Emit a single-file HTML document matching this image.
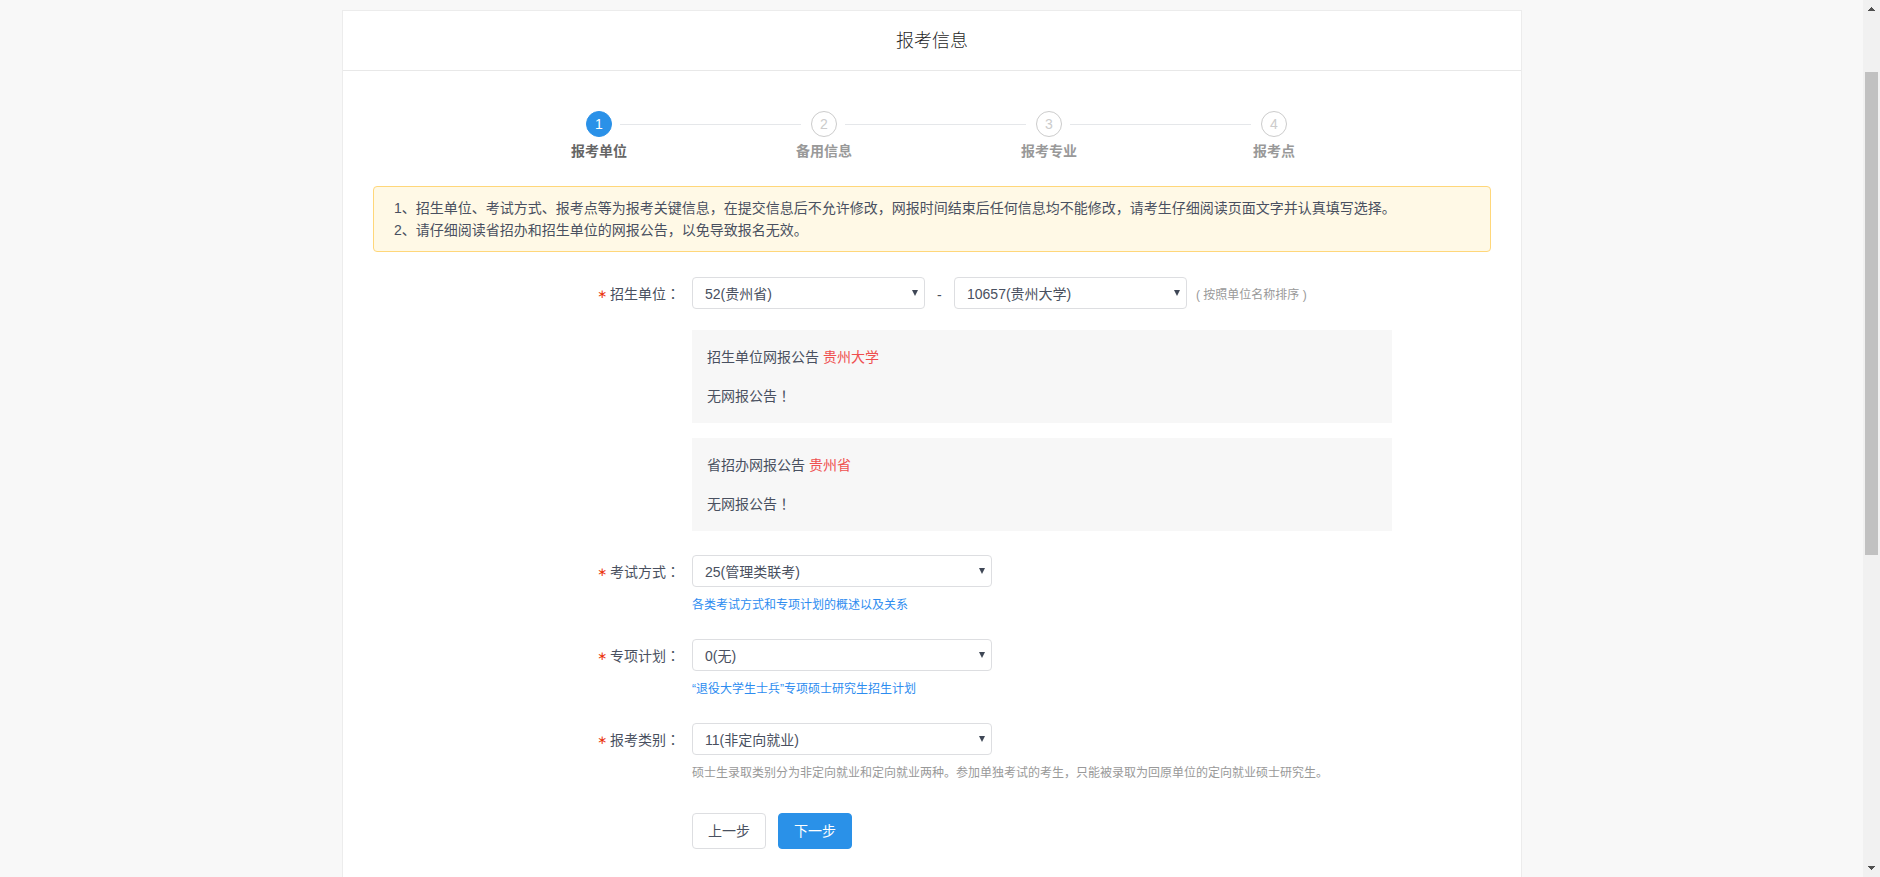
<!DOCTYPE html>
<html lang="zh-CN">
<head>
<meta charset="utf-8">
<title>报考信息</title>
<style>
*{box-sizing:border-box;margin:0;padding:0}
html,body{width:1880px;height:877px;overflow:hidden}
body{position:relative;background:#f8f8f8;color:#495060;font-family:"Liberation Sans","Noto Sans CJK SC",sans-serif;font-size:14px;line-height:1.5}
.abs{position:absolute;white-space:nowrap}
/* card */
#card{position:absolute;left:342px;top:10px;width:1180px;height:900px;background:#fff;border:1px solid #ececec}
#hd{position:absolute;left:0;top:0;width:1178px;height:60px;border-bottom:1px solid #e8e8e8;text-align:center;font-size:18px;font-weight:300;line-height:60px;color:#1f1f1f}
/* steps */
.dot{position:absolute;top:111px;width:26px;height:26px;border-radius:50%;border:1px solid #ccc;background:#fff;color:#ccc;text-align:center;font-size:14px;line-height:24px}
.dot.on{background:#2a91e8;border-color:#2a91e8;color:#fff}
.ln{position:absolute;top:124px;height:1px;width:181px;background:#e5e7ea}
.st{position:absolute;top:140px;width:120px;text-align:center;font-weight:bold;font-size:14px;line-height:22px;color:#999}
.st.on{color:#666}
/* alert */
#alert{position:absolute;left:373px;top:186px;width:1118px;height:66px;background:#fff9e6;border:1px solid #ffd77a;border-radius:4px;padding:10px 20px;font-size:14px;line-height:22px;color:#495060}
/* form */
.lab{position:absolute;width:86px;text-align:right;font-size:14px;line-height:32px;color:#495060;white-space:nowrap}
.lab i{position:absolute;left:3px;top:0;font-style:normal;color:#ea3208;font-family:"DejaVu Sans",sans-serif;font-size:12px;line-height:32px}
.jp{font-family:"Liberation Sans","Noto Sans CJK JP",sans-serif}
.sel{position:absolute;height:32px;border:1px solid #dddee1;border-radius:4px;background:#fff;font-size:14px;line-height:30px;padding:1px 0 0 12px;color:#495060;white-space:nowrap}
.sel:after{content:"";position:absolute;right:6px;top:12px;border:3.5px solid transparent;border-top:6px solid #3f4756;border-bottom:0}
.box{position:absolute;left:692px;width:700px;height:93px;background:#f7f7f7}
.box p{position:absolute;left:15px;font-size:14px;line-height:22px;color:#495060;white-space:nowrap}
.box p .r{color:#ef5050}
.tip{position:absolute;left:692px;font-size:12px;line-height:18px;white-space:nowrap}
.btn{position:absolute;top:813px;width:74px;height:36px;border-radius:4px;font-size:14px;line-height:34px;text-align:center}
/* scrollbar */
#sb{position:absolute;left:1863px;top:0;width:17px;height:877px;background:#f1f1f1}
#th{position:absolute;left:2px;top:72px;width:13px;height:483px;background:#c1c1c1}
</style>
</head>
<body>
<div id="card"><div id="hd">报考信息</div></div>

<div class="dot on" style="left:586px">1</div>
<div class="ln" style="left:620px"></div>
<div class="dot" style="left:811px">2</div>
<div class="ln" style="left:845px"></div>
<div class="dot" style="left:1036px">3</div>
<div class="ln" style="left:1070px"></div>
<div class="dot" style="left:1261px">4</div>
<div class="st on" style="left:539px">报考单位</div>
<div class="st" style="left:764px">备用信息</div>
<div class="st" style="left:989px">报考专业</div>
<div class="st" style="left:1214px">报考点</div>

<div id="alert">1、招生单位、考试方式、报考点等为报考关键信息，在提交信息后不允许修改，网报时间结束后任何信息均不能修改，请考生仔细阅读页面文字并认真填写选择。<br>2、请仔细阅读省招办和招生单位的网报公告，以免导致报名无效。</div>

<div class="lab" style="left:594px;top:278px"><i>∗</i>招生单位<span class="jp" lang="ja">：</span></div>
<div class="sel" style="left:692px;top:277px;width:233px">52(贵州省)</div>
<div class="abs" style="left:937px;top:279px;line-height:32px;color:#495060">-</div>
<div class="sel" style="left:954px;top:277px;width:233px">10657(贵州大学)</div>
<div class="abs" style="left:1196px;top:279px;line-height:32px;font-size:12px;color:#999">( 按照单位名称排序 )</div>

<div class="box" style="top:330px"><p style="top:16px">招生单位网报公告 <span class="r">贵州大学</span></p><p style="top:55px">无网报公告<span class="jp" lang="ja">！</span></p></div>
<div class="box" style="top:438px"><p style="top:16px">省招办网报公告 <span class="r">贵州省</span></p><p style="top:55px">无网报公告<span class="jp" lang="ja">！</span></p></div>

<div class="lab" style="left:594px;top:556px"><i>∗</i>考试方式<span class="jp" lang="ja">：</span></div>
<div class="sel" style="left:692px;top:555px;width:300px">25(管理类联考)</div>
<div class="tip" style="top:596px;color:#2d8cf0">各类考试方式和专项计划的概述以及关系</div>

<div class="lab" style="left:594px;top:640px"><i>∗</i>专项计划<span class="jp" lang="ja">：</span></div>
<div class="sel" style="left:692px;top:639px;width:300px">0(无)</div>
<div class="tip" style="top:680px;color:#2d8cf0">“退役大学生士兵”专项硕士研究生招生计划</div>

<div class="lab" style="left:594px;top:724px"><i>∗</i>报考类别<span class="jp" lang="ja">：</span></div>
<div class="sel" style="left:692px;top:723px;width:300px">11(非定向就业)</div>
<div class="tip" style="top:764px;color:#999">硕士生录取类别分为非定向就业和定向就业两种。参加单独考试的考生，只能被录取为回原单位的定向就业硕士研究生。</div>

<div class="btn" style="left:692px;background:#fff;border:1px solid #dddee1;color:#495060">上一步</div>
<div class="btn" style="left:778px;background:#2a91e8;border:1px solid #2a91e8;color:#fff">下一步</div>

<div id="sb"><div id="th"></div>
<svg class="abs" style="left:0;top:0" width="17" height="17" viewBox="0 0 17 17" shape-rendering="crispEdges"><path fill="#505050" d="M8 7h1v1h-1zM7 8h3v1h-3zM6 9h5v1h-5zM5 10h7v1h-7z"/></svg>
<svg class="abs" style="left:0;top:860px" width="17" height="17" viewBox="0 0 17 17" shape-rendering="crispEdges"><path fill="#505050" d="M5 6h7v1h-7zM6 7h5v1h-5zM7 8h3v1h-3zM8 9h1v1h-1z"/></svg>
</div>
</body>
</html>
